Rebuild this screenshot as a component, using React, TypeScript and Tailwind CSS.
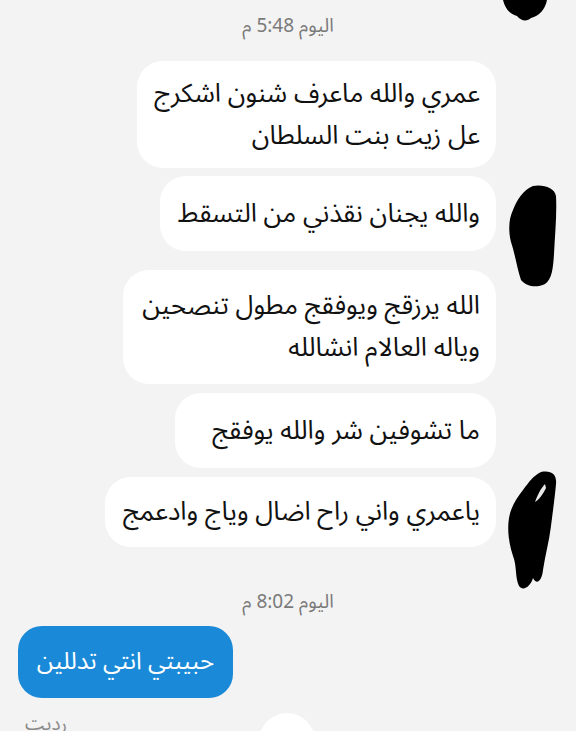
import React from "react";

const font = { fontFamily: '"Noto Sans Arabic", "Noto Naskh Arabic", "DejaVu Sans", sans-serif' };

function Bubble({ w, children, h }: { w: number; h: string; children: React.ReactNode }) {
  return (
    <div
      dir="rtl"
      className={`bg-white rounded-[26px] px-4 flex flex-col justify-center text-[26px] leading-[42px] text-[#111] whitespace-nowrap ${h}`}
      style={{ width: w }}
    >
      {children}
    </div>
  );
}

export default function App() {
  return (
    <div className="relative w-[576px] h-[731px] overflow-hidden bg-[#f3f3f3]" style={font}>
      <div className="flex flex-col">
        <div dir="rtl" className="h-[61px] flex items-center justify-center text-[19px] text-[#7a7a7a] pb-[8px]">
          اليوم 5:48 م
        </div>
        <div className="flex flex-col items-end pr-[80px]">
          <Bubble w={359} h="h-[107px]">
            <div>عمري والله ماعرف شنون اشكرج</div>
            <div>عل زيت بنت السلطان</div>
          </Bubble>
          <div className="h-[8px]" />
          <Bubble w={336} h="h-[75px]">
            <div>والله يجنان نقذني من التسقط</div>
          </Bubble>
          <div className="h-[19px]" />
          <Bubble w={373} h="h-[114px]">
            <div>الله يرزقج ويوفقج مطول تنصحين</div>
            <div>وياله العالام انشالله</div>
          </Bubble>
          <div className="h-[9px]" />
          <Bubble w={321} h="h-[75px]">
            <div>ما تشوفين شر والله يوفقج</div>
          </Bubble>
          <div className="h-[9px]" />
          <Bubble w={391} h="h-[70px]">
            <div>ياعمري واني راح اضال وياج وادعمج</div>
          </Bubble>
        </div>
        <div dir="rtl" className="h-[79px] flex items-end justify-center text-[19px] text-[#7a7a7a] pb-[10px]">
          اليوم 8:02 م
        </div>
        <div className="pl-[18px]">
          <div
            dir="rtl"
            className="w-[215px] h-[72px] rounded-[24px] bg-[#1a8ad8] text-white text-[24px] flex items-center justify-center whitespace-nowrap"
          >
            حبيبتي انتي تدللين
          </div>
        </div>
        <div className="flex items-start pl-[25px] pt-[14px]">
          <div className="text-[19px] text-[#8a8a8a] leading-[24px]">رديت</div>
        </div>
      </div>

      {/* white circle at bottom */}
      <div className="absolute left-[259px] top-[713px] w-[56px] h-[56px] rounded-full bg-white" />

      {/* scribbles */}
      <svg className="absolute left-[495px] top-0" width="60" height="24" viewBox="0 0 60 24">
        <path d="M8 0 C10 8 14 14 22 16 C26 21 32 22 36 18 C44 16 50 10 52 0 Z" fill="#000" />
      </svg>
      <svg className="absolute left-[505px] top-[184px]" width="55" height="106" viewBox="0 0 55 106">
        <path d="M28 2 C38 0 50 4 51 12 C52 30 50 50 49 70 C48 85 47 95 40 100 C32 104 22 103 16 96 C12 84 10 70 6 58 C3 46 4 34 8 26 C12 16 18 6 28 2 Z" fill="#000" />
      </svg>
      <svg className="absolute left-[505px] top-[470px]" width="56" height="124" viewBox="0 0 56 124">
        <path d="M36 2 C46 0 52 4 51 14 C50 26 48 40 46 56 C44 72 40 86 38 100 C37 110 32 116 28 108 C26 116 18 122 14 116 C10 108 12 96 8 86 C4 74 2 60 4 48 C6 36 12 28 18 20 C24 12 28 6 36 2 Z" fill="#000" />
        <path d="M40 14 C36 18 32 26 30 32 C34 30 38 24 41 18 Z" fill="#e8e8e8" />
      </svg>
    </div>
  );
}
